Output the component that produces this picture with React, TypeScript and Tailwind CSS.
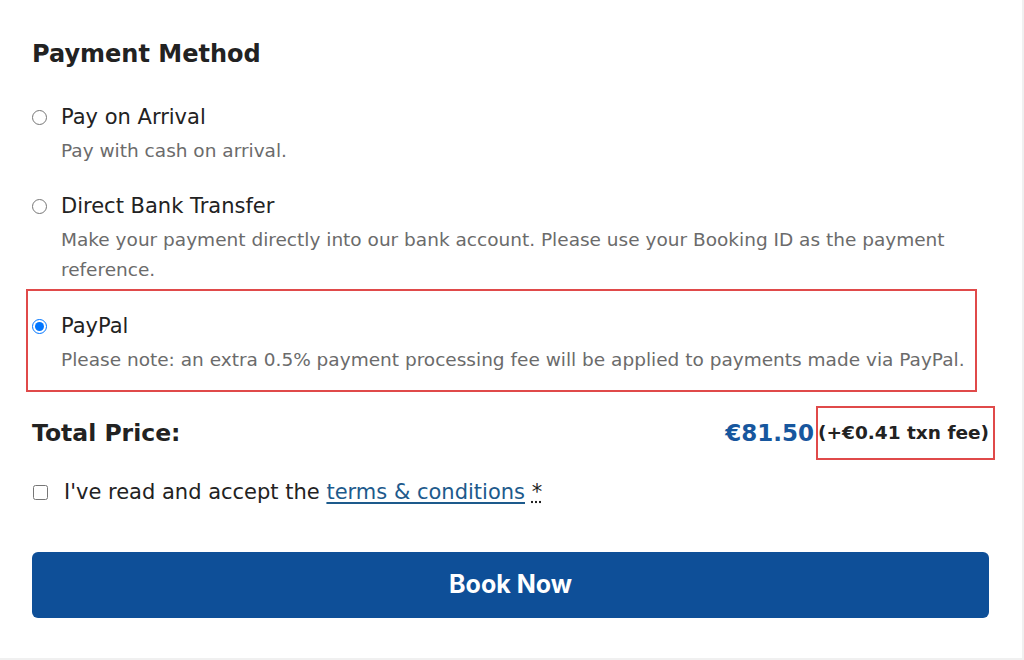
import { useState } from 'react';

const font = { fontFamily: '"DejaVu Sans", Inter, sans-serif' };

type Method = {
  id: string;
  label: string;
  note: string;
};

const methods: Method[] = [
  { id: 'arrival', label: 'Pay on Arrival', note: 'Pay with cash on arrival.' },
  {
    id: 'bank',
    label: 'Direct Bank Transfer',
    note: 'Make your payment directly into our bank account. Please use your Booking ID as the payment reference.',
  },
  {
    id: 'paypal',
    label: 'PayPal',
    note: 'Please note: an extra 0.5% payment processing fee will be applied to payments made via PayPal.',
  },
];

export default function App() {
  const [method, setMethod] = useState<string>('paypal');
  const [accepted, setAccepted] = useState<boolean>(false);

  return (
    <div
      className="h-[660px] w-[1024px] overflow-hidden border-r-2 border-b-2 border-[#f0f0f0] bg-white"
      style={font}
    >
      <div className="w-[989px] pl-8 pt-[36px]">
        <h2 className="text-[24px] font-bold leading-[36px] text-[#222]">
          Payment Method
        </h2>

        <div className="mt-[30px] flex flex-col">
          {methods.map((m, i) => {
            const active = m.id === method;
            return (
              <label
                key={m.id}
                className={
                  active
                    ? '-ml-[6px] mt-[4px] w-[951px] cursor-pointer border-2 border-[#e04a4a] pb-[15px] pl-[4px] pt-[20px]'
                    : i === 0
                      ? 'cursor-pointer'
                      : 'mt-[25px] cursor-pointer'
                }
              >
                <div className="flex items-center">
                  <input
                    type="radio"
                    name="method"
                    checked={active}
                    onChange={() => setMethod(m.id)}
                    className="m-0 h-[15px] w-[15px]"
                  />
                  <span className="ml-[14px] text-[21px] leading-[30px] text-[#222]">
                    {m.label}
                  </span>
                </div>
                <p className="mt-[4px] pl-[29px] pr-[10px] text-[18.5px] leading-[30px] text-[#6b6b6b]">
                  {m.note}
                </p>
              </label>
            );
          })}
        </div>

        {/* total */}
        <div className="mt-[14px] flex items-center justify-between">
          <span className="text-[23.5px] font-bold leading-[36px] text-[#222]">
            Total Price:
          </span>
          <div className="flex items-center">
            <span className="text-[23px] font-bold leading-[36px] text-[#17579e]">
              €81.50
            </span>
            <span className="-mr-[6px] ml-[2px] border-2 border-[#e04a4a] py-[11px] pr-[4px] text-[18.5px] font-bold leading-[28px] text-[#222]">
              (+€0.41 txn fee)
            </span>
          </div>
        </div>

        {/* terms */}
        <label className="mt-[17px] flex cursor-pointer items-center">
          <input
            type="checkbox"
            checked={accepted}
            onChange={(e) => setAccepted(e.target.checked)}
            className="m-0 ml-[1px] h-[15px] w-[15px]"
          />
          <span className="ml-[16px] text-[21px] leading-[30px] text-[#222]">
            I've read and accept the{' '}
            <a href="#" className="text-[#1d5a8c] underline underline-offset-[3px]">
              terms &amp; conditions
            </a>{' '}
            <abbr title="required" className="text-[#222] underline decoration-dotted">
              *
            </abbr>
          </span>
        </label>

        <button
          className="mt-[45px] flex h-[66px] w-full items-center justify-center rounded-[6px] bg-[#0e4f98] text-[25px] font-bold text-white"
          style={{ fontFamily: 'Inter, sans-serif' }}
        >
          Book Now
        </button>
      </div>
    </div>
  );
}
